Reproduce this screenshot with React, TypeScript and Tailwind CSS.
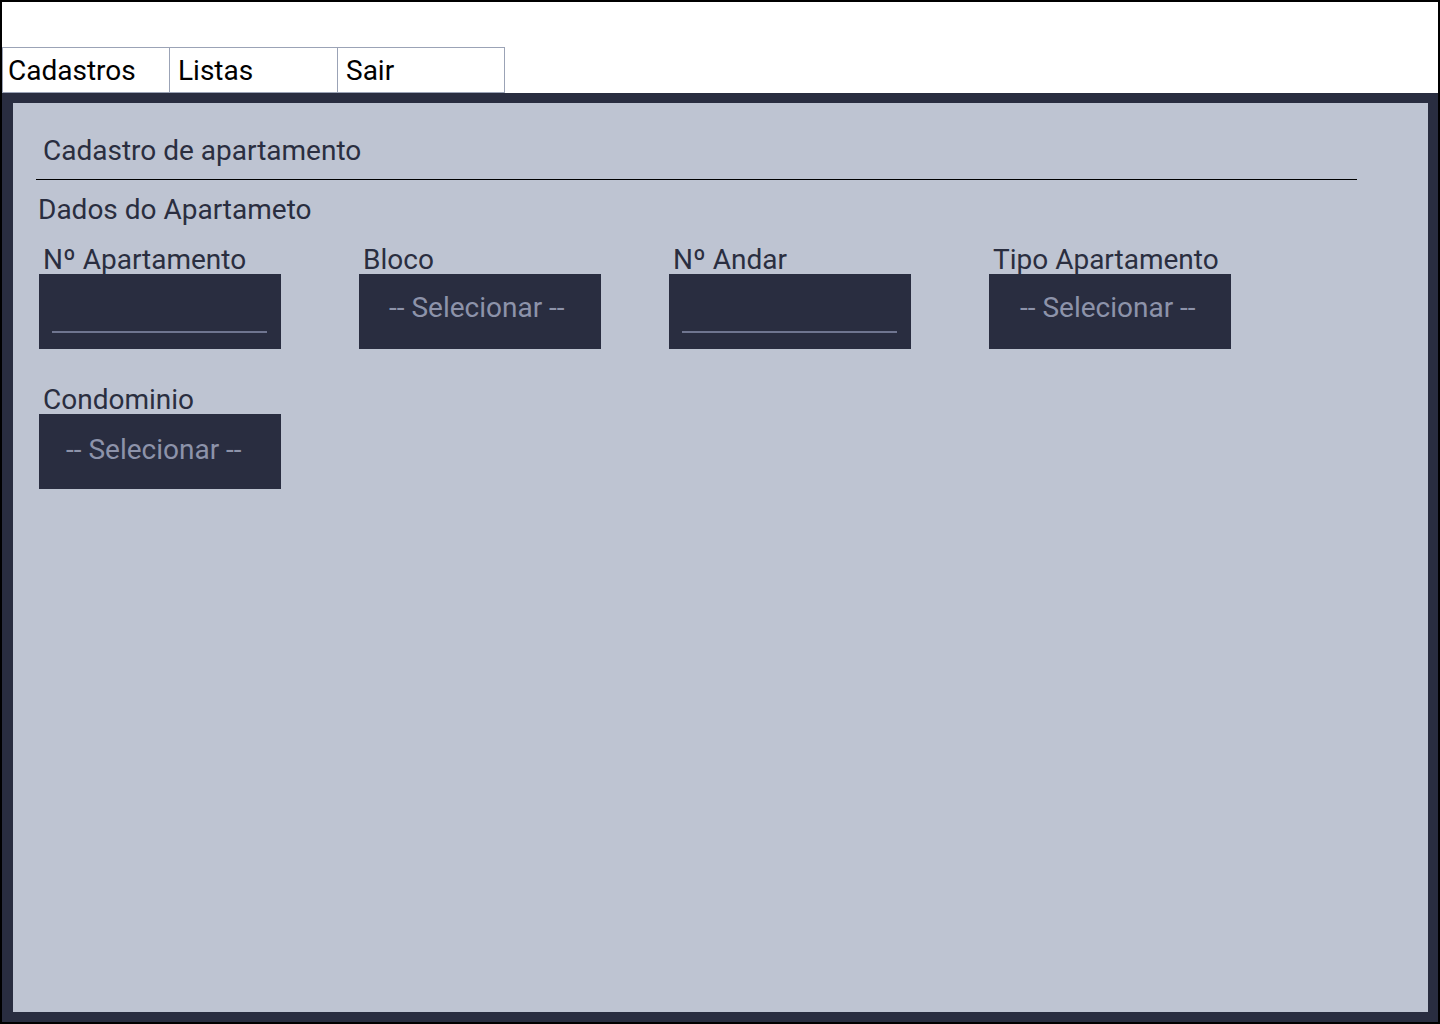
import React from "react";

function TextBox() {
  return (
    <div className="h-[75px] w-[242px] bg-[#292d40] pl-[13px] pr-[14px] pt-[57px]">
      <div className="h-[2px] w-full bg-[#6f7590]" />
    </div>
  );
}

function SelectBox({ pl, pt }: { pl: string; pt: string }) {
  return (
    <div className={`h-[75px] w-[242px] bg-[#292d40] ${pl} ${pt} text-[28px] leading-[32px] text-[#8d93aa]`}>
      -- Selecionar --
    </div>
  );
}

function Field({ label, children }: { label: string; children: React.ReactNode }) {
  return (
    <div className="flex w-[242px] flex-col">
      <div className="h-[32px] whitespace-nowrap pl-[4px] pt-[3px] text-[28px] leading-[29px] text-[#2a2e40]">{label}</div>
      {children}
    </div>
  );
}

export default function App() {
  return (
    <div
      className="flex h-[1024px] w-[1440px] flex-col border-2 border-black bg-white"
      style={{ fontFamily: "Roboto, 'Liberation Sans', sans-serif" }}
    >
      <div className="h-[45px] shrink-0" />
      <nav className="flex h-[46px] shrink-0">
        <div className="h-[46px] w-[168px] border border-[#9ba3b6] pl-[5px] text-[28px] leading-[46px] text-black">
          Cadastros
        </div>
        <div className="h-[46px] w-[168px] border-y border-r border-[#9ba3b6] pl-[8px] text-[28px] leading-[46px] text-black">
          Listas
        </div>
        <div className="h-[46px] w-[167px] border-y border-r border-[#9ba3b6] pl-[8px] text-[28px] leading-[46px] text-black">
          Sair
        </div>
      </nav>
      <div className="flex min-h-0 flex-1 bg-[#292d40] pb-[10px] pl-[11px] pr-[10px] pt-[10px]">
        <div className="flex flex-1 flex-col bg-[#bec4d2] pt-[32px]">
          <h1 className="h-[32px] pl-[30px] text-[28px] font-normal leading-[32px] text-[#2a2e40]">
            Cadastro de apartamento
          </h1>
          <div className="ml-[23px] mt-[12px] h-px w-[1321px] bg-black" />
          <h2 className="mt-[14px] h-[32px] pl-[25px] text-[28px] font-normal leading-[32px] text-[#2a2e40]">
            Dados do Apartameto
          </h2>
          <div className="mt-[16px] flex pl-[26px]">
            <Field label="Nº Apartamento">
              <TextBox />
            </Field>
            <div className="ml-[78px]">
              <Field label="Bloco">
                <SelectBox pl="pl-[30px]" pt="pt-[18px]" />
              </Field>
            </div>
            <div className="ml-[68px]">
              <Field label="Nº Andar">
                <TextBox />
              </Field>
            </div>
            <div className="ml-[78px]">
              <Field label="Tipo Apartamento">
                <SelectBox pl="pl-[31px]" pt="pt-[18px]" />
              </Field>
            </div>
          </div>
          <div className="mt-[33px] flex pl-[26px]">
            <Field label="Condominio">
              <SelectBox pl="pl-[27px]" pt="pt-[20px]" />
            </Field>
          </div>
        </div>
      </div>
    </div>
  );
}
